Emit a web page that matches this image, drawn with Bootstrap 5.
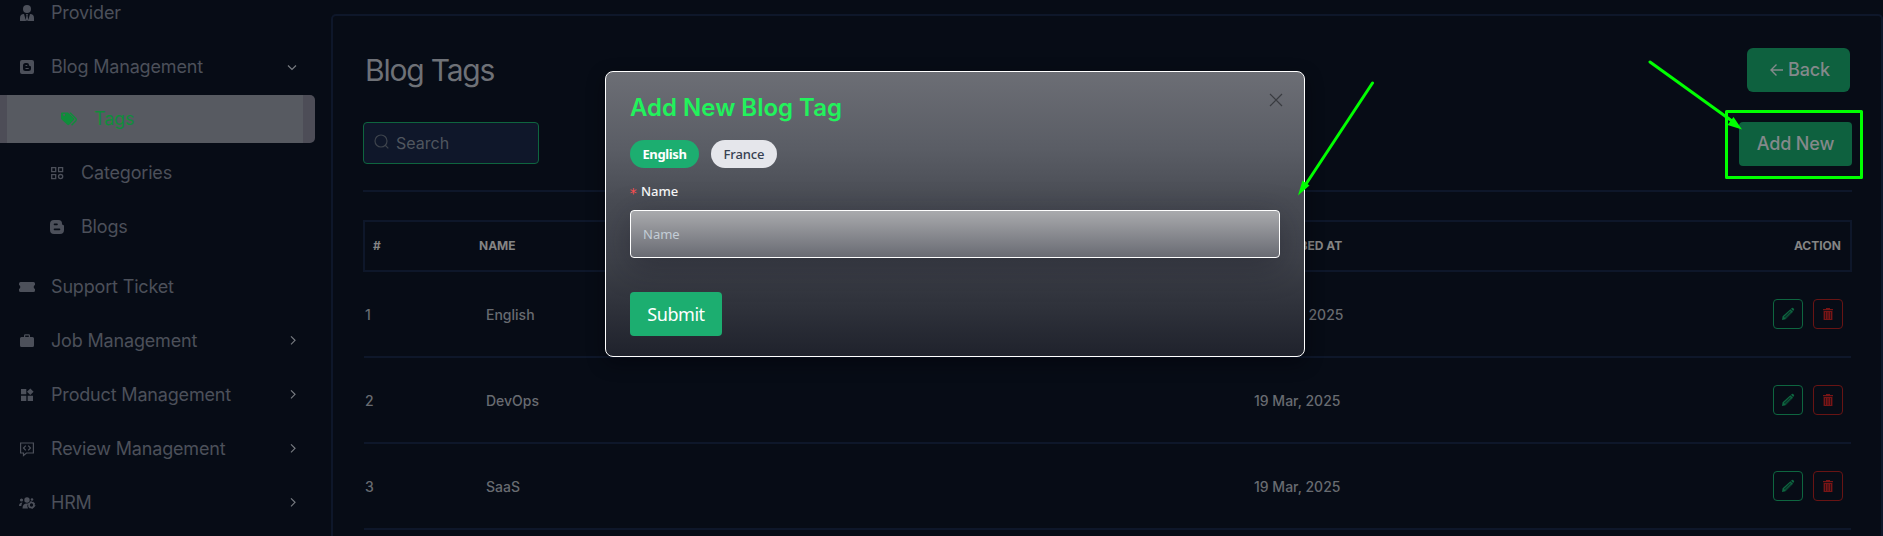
<!DOCTYPE html>
<html lang="en">
<head>
<meta charset="utf-8">
<meta name="viewport" content="width=device-width, initial-scale=1">
<title>Blog Tags</title>
<link href="https://cdn.jsdelivr.net/npm/bootstrap@5.3.0/dist/css/bootstrap.min.css" rel="stylesheet">
<style>
  body { background:#070c16; font-family:Inter,"Liberation Sans",sans-serif; color:#7b7d82; height:536px; overflow:hidden; }
  .shell { height:536px; }
  .side { width:331px; color:#4c505a; font-size:18px; letter-spacing:-.17px; margin-top:-11px; }
  .side-item { height:48px; margin-bottom:6px; padding-left:18px; width:315px; line-height:48px; }
  .side-item svg.ico { width:18px; height:18px; margin-right:15px; flex:none; }
  .side-item .chev { width:12px; height:12px; margin-left:auto; margin-right:16px; }
  .side-sub { padding-left:48px; }
  .side-active { background:linear-gradient(90deg,#4d4d57 7px,#575a61 7px,#575a61 303px,#4d4d57 303px); color:#108d3b; border-radius:0 5px 5px 0; padding-left:60px; }
  .panel { border:2px solid #0e172a; border-bottom:0; border-radius:5px 5px 0 0; margin-top:14px; width:1552px; height:522px; padding:32px 29px 0 30px; flex:none; }
  .page-title { font-size:30px; line-height:44px; font-weight:400; color:#6e7177; padding-left:2px; letter-spacing:-1.2px; }
  .btn-dim { background:#0e613f; color:#84898b; font-size:18px; font-weight:500; height:44px; line-height:44px; padding:0; border:0; border-radius:4px; letter-spacing:-.15px; }
  .btn-back { width:103px; border-radius:6px; margin-right:2px; padding-left:3px; }
  .btn-back svg { margin:-2px 5px 0 0; }
  .btn-add { width:113px; }
  .search { width:176px; height:42px; border:1px solid #0e653f; border-radius:4px; background:#0f172a; padding-left:10px; font-size:16px; color:#50565f; }
  .search svg { margin:-3px 7px 0 0; }
  .tools { margin-top:30px; height:44px; }
  .rule { height:2px; background:#0e172a; margin-top:24px; }
  .tags { margin-top:28px; width:1489px; }
  .tags-head { height:52px; border:2px solid #0e172a; font-size:12px; font-weight:700; color:#848484; padding:0 9px 0 8px; }
  .tags-row { height:86px; border-bottom:2px solid #0e172a; margin:0 1px; font-size:14px; font-weight:500; color:#686b71; padding:0 8px 0 1px; }
  .c-num { width:106px; flex:none; } .c-name { width:768px; flex:none; }
  .tags-row .c-num { width:121px; }
  .act { width:30px; height:30px; border:1px solid #0e6640; border-radius:4px; color:#0e6640; }
  .act-del { border-color:#681414; color:#781516; margin-left:10px; }
  .dlg { position:absolute; left:605px; top:71px; width:700px; height:286px; border:1px solid #fff; border-radius:8px; padding:0 24px; background:linear-gradient(#6c6e75 0,#5a5d65 27%,#494c54 45%,#3f424a 65%,#1f222c 100%); box-shadow:0 6px 18px rgba(0,0,8,.45); overflow:hidden; font-family:"Noto Sans",sans-serif; }
  .dlg-title { font:600 24px/32px Inter,sans-serif; color:#22f25c; margin:20px 0 0; }
  .dlg-close { width:14px; height:14px; margin-top:21px; margin-right:-3px; }
  .pill { height:28px; line-height:28px; border-radius:14px; font-size:13px; text-align:center; }
  .pill-on { width:69px; background:#1cae70; color:#fff; font-weight:700; letter-spacing:-.35px; }
  .pill-off { width:66px; background:#e5e6eb; color:#374151; font-weight:500; letter-spacing:-.1px; }
  .lbl { font-size:13px; font-weight:500; color:#f4f4f5; line-height:20px; height:20px; margin-top:13px; }
  .lbl span { color:#ff4d4f; font:14px/14px "DejaVu Sans Mono",monospace; width:12px; margin-left:-1px; display:inline-block; vertical-align:-2px; }
  .field { width:650px; height:48px; margin-top:9px; border:1px solid #fff; border-radius:4px; background:linear-gradient(#a9aaad,#696b73); color:#c3cdd6; font-size:13px; line-height:46px; padding-left:12px; box-shadow:0 8px 32px rgba(18,20,32,.37); }
  .submit { width:92px; height:44px; margin-top:34px; background:#1cae70; color:#fff; border:0; border-radius:4px; font-size:18px; line-height:44px; padding:0; letter-spacing:-.45px; }
  .marks { position:absolute; left:0; top:0; pointer-events:none; }
</style>
</head>
<body>
<div class="shell d-flex">
  <nav class="side flex-shrink-0">
    <div class="side-item d-flex align-items-center"><svg class="ico" viewBox="0 0 18 18" fill="currentColor"><circle cx="9" cy="5" r="4"/><path d="M2 17v-3q0-4 4-4l2 7zM16 17v-3q0-4-4-4l-2 7zM8 10h2l-.5 1.5.8 4.500L9 17l-1.300-1 .8-4.500z"/></svg>Provider</div>
    <div class="side-item d-flex align-items-center" style="margin-bottom:4px"><svg class="ico" viewBox="0 0 18 18" fill="currentColor"><path fill-rule="evenodd" d="M4 2h10q2 0 2 2v10q0 2-2 2H4q-2 0-2-2V4q0-2 2-2zm3.500 3Q5 5 5 7.500v3Q5 13 7.500 13h3q2.500 0 2.500-2.500V9q0-1-1-1t-1-1q0-2-2-2zM7.500 6.900h1.800v1.200H7.500zm0 3h3.200v1.200H7.500z"/></svg>Blog Management<svg class="chev" style="margin-right:17px" viewBox="0 0 12 12" fill="none" stroke="#777b80" stroke-width="1.2"><path d="M2 4.500l4 4 4-4"/></svg></div>
    <div class="side-item side-active d-flex align-items-center"><svg class="ico" style="margin-right:16px" viewBox="0 0 18 18" fill="currentColor"><path fill-rule="evenodd" d="M1 3.500Q1 2.500 2 2.500h6l5.800 5.800q.9.900 0 1.800l-4.600 4.700q-.9.900-1.800 0L1 9zm2 1.300a1.100 1.100 0 102.200 0 1.100 1.100 0 10-2.200 0z"/><path d="M10 2.800l6 6q.8 1-.1 2l-4.300 4.400" fill="none" stroke="currentColor" stroke-width="1.400"/></svg>Tags</div>
    <div class="side-item side-sub d-flex align-items-center"><svg class="ico" viewBox="0 0 18 18" fill="none" stroke="currentColor" stroke-width="1.300"><path d="M3.700 3.700h4v4h-4zM10.600 3.700h4v4h-4zM3.700 10.600h4v4h-4z"/><circle cx="12.600" cy="12.600" r="2.100"/></svg>Categories</div>
    <div class="side-item side-sub d-flex align-items-center" style="margin-bottom:12px"><svg class="ico" viewBox="0 0 18 18" fill="currentColor"><path fill-rule="evenodd" d="M6 2h4.500q3.500 0 3.500 3.500 0 1.500 1.200 1.500.8 0 .8 1v4q0 4-4 4H6q-4 0-4-4V6q0-4 4-4zm.5 3.600q-.8 0-.8.800t.8.800H9q.8 0 .8-.8T9 5.600zm0 5q-.8 0-.8.800t.8.800h5q.8 0 .8-.8t-.8-.8z"/></svg>Blogs</div>
    <div class="side-item d-flex align-items-center"><svg class="ico" viewBox="0 0 18 18" fill="currentColor"><path d="M2.500 4h13Q17 4 17 5.500V7q-1.300.5-1.300 2t1.300 2v1.500q0 1.500-1.500 1.500h-13Q1 14 1 12.500V11q1.300-.5 1.300-2T1 7V5.500Q1 4 2.500 4z"/></svg>Support Ticket</div>
    <div class="side-item d-flex align-items-center"><svg class="ico" viewBox="0 0 18 18" fill="currentColor"><path fill-rule="evenodd" d="M6 5V3.500Q6 2.200 7.300 2.200h3.400Q12 2.200 12 3.500V5h2.500Q16 5 16 6.500v7q0 1.500-1.500 1.500h-11Q2 15 2 13.500v-7Q2 5 3.500 5zm1.200 0h3.600V3.400H7.200z"/></svg>Job Management<svg class="chev" viewBox="0 0 12 12" fill="none" stroke="#777b80" stroke-width="1.200"><path d="M4 1.300l4 4-4 4"/></svg></div>
    <div class="side-item d-flex align-items-center"><svg class="ico" viewBox="0 0 18 18" fill="currentColor"><path d="M3 3h5.300v5.300H3zM12.300 2.400l3.300 3.300L12.300 9 9 5.700zM3 9.700h5.300V15H3zM9.700 9.700H15V15H9.700z"/></svg>Product Management<svg class="chev" viewBox="0 0 12 12" fill="none" stroke="#777b80" stroke-width="1.200"><path d="M4 1.300l4 4-4 4"/></svg></div>
    <div class="side-item d-flex align-items-center"><svg class="ico" viewBox="0 0 18 18" fill="none" stroke="currentColor" stroke-width="1.200"><path d="M2.600 3h12.800v10H8.500L5.500 15.500V13H2.600zM7.800 5.700L5.500 8l2.300 2.300M10.200 5.700L12.500 8l-2.300 2.300"/></svg>Review Management<svg class="chev" viewBox="0 0 12 12" fill="none" stroke="#777b80" stroke-width="1.200"><path d="M4 1.300l4 4-4 4"/></svg></div>
    <div class="side-item d-flex align-items-center mb-0"><svg class="ico" viewBox="0 0 18 18" fill="currentColor"><circle cx="9" cy="6" r="2.700"/><circle cx="3.500" cy="6" r="1.600"/><circle cx="14" cy="5.500" r="1.300"/><path d="M1 12q0-3.500 3.500-3.500-1 1-1.200 3.500zM4.500 14.500q0-5 4.500-5h1q-1.500 2.500 0 5z"/><circle cx="13.500" cy="11" r="2.500" fill="none" stroke="currentColor" stroke-width="1.700"/><circle cx="13.500" cy="11" r="3.400" fill="none" stroke="currentColor" stroke-dasharray="1.600 1.960"/></svg>HRM<svg class="chev" viewBox="0 0 12 12" fill="none" stroke="#777b80" stroke-width="1.200"><path d="M4 1.300l4 4-4 4"/></svg></div>
  </nav>

  <main class="panel">
    <div class="d-flex justify-content-between"><h1 class="page-title m-0">Blog Tags</h1>
      <button class="btn btn-dim btn-back"><svg width="13" height="14" viewBox="0 0 13 14" fill="none" stroke="currentColor" stroke-width="1.400"><path d="M13 7H1M6.500 1.500L1 7l5.500 5.500"/></svg>Back</button></div>
    <div class="tools d-flex justify-content-between">
      <div class="search d-flex align-items-center"><svg width="15" height="15" viewBox="0 0 15 15" fill="none" stroke="#3d434c" stroke-width="1.200"><circle cx="7" cy="7" r="6"/><path d="M11 11l3.300 3.300"/></svg>Search</div>
      <button class="btn btn-dim btn-add">Add New</button>
    </div>
    <div class="rule"></div>
    <div class="tags">
      <div class="tags-head d-flex align-items-center"><div class="c-num">#</div><div class="c-name">NAME</div><div>SUBSCRIBED AT</div><div class="ms-auto">ACTION</div></div>
      <div id="rows"></div>
    </div>
  </main>
</div>

<section class="dlg">
  <div class="d-flex justify-content-between"><h2 class="dlg-title">Add New Blog Tag</h2>
    <svg class="dlg-close" viewBox="0 0 14 14" fill="none" stroke="#393b40" stroke-width="1.200"><path d="M1 1l12 12M13 1L1 13"/></svg></div>
  <div class="d-flex" style="gap:12px;margin-top:16px"><div class="pill pill-on">English</div><div class="pill pill-off">France</div></div>
  <div class="lbl"><span>*</span>Name</div>
  <div class="field">Name</div>
  <button class="btn submit">Submit</button>
</section>

<!-- walkthrough annotations -->
<svg class="marks" width="1883" height="536" fill="none" stroke="#0f0" stroke-width="3">
  <rect x="1726.500" y="111.500" width="135" height="66" stroke-linejoin="round"/>
  <path d="M1650 62L1732 121M1372.500 83L1306 184" stroke-linecap="round"/>
  <path d="M1742 129.500l-14.500-4.500 6-8zM1298 195.500l4.500-15 7 5z" fill="#0f0" stroke="none"/>
</svg>
<script src="https://cdn.jsdelivr.net/npm/bootstrap@5.3.0/dist/js/bootstrap.bundle.min.js"></script>
<script>
  const pencil = '<svg width="14" height="14" viewBox="0 0 14 14" fill="currentColor"><path fill-rule="evenodd" d="M1 13l.6-3.700 7.800-7.100 2.600 2.600-7.500 7.500zM10 1.700l.9-.8q.6-.4 1.200.1l.8.8q.6.700 0 1.300l-.8.900zM3 10l6.200-5.900.4.400L3.500 10.400zM4 11.200l6.200-6 .3.300-6.100 6z"/></svg>';
  const trash = '<svg width="14" height="14" viewBox="0 0 14 14" fill="currentColor"><path fill-rule="evenodd" d="M5 1h4v1h3v1.200H2V2h3zM2.600 4h8.800v9H2.600zm1.600 1v7h.6V5zm2.500 0v7h.6V5zm2.500 0v7h.6V5z"/></svg>';
  const tags = [[1,'English','20 Mar, 2025'],[2,'DevOps','19 Mar, 2025'],[3,'SaaS','19 Mar, 2025']];
  document.getElementById('rows').innerHTML = tags.map(t =>
    `<div class="tags-row d-flex align-items-center"><div class="c-num">${t[0]}</div><div class="c-name">${t[1]}</div><div>${t[2]}</div>
     <div class="act ms-auto d-flex align-items-center justify-content-center">${pencil}</div><div class="act act-del d-flex align-items-center justify-content-center">${trash}</div></div>`).join('');
</script>
</body>
</html>
